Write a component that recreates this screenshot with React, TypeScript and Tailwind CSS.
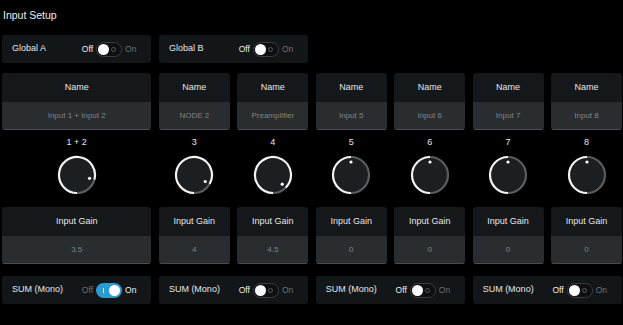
import React from 'react';

type Channel = {
  label: string;
  name: string;
  gain: number;
  wide?: boolean;
};

const channels: Channel[] = [
  { label: '1 + 2', name: 'Input 1 + Input 2', gain: 3.5, wide: true },
  { label: '3', name: 'NODE 2', gain: 4 },
  { label: '4', name: 'Preamplifier', gain: 4.5 },
  { label: '5', name: 'Input 5', gain: 0 },
  { label: '6', name: 'Input 6', gain: 0 },
  { label: '7', name: 'Input 7', gain: 0 },
  { label: '8', name: 'Input 8', gain: 0 },
];

const sums = [true, false, false, false];

function Toggle({ on }: { on: boolean }) {
  return (
    <div className="flex items-center gap-[3px] text-[8.5px]">
      <span className={on ? 'text-[#6d7073]' : 'text-[#eeeeee]'}>Off</span>
      {on ? (
        <div className="flex h-[15px] w-[26px] items-center justify-between rounded-full bg-[#2b9bd2] pl-[7px] pr-[2px]">
          <span className="h-[5px] w-px bg-[#cfe9f6]" />
          <span className="h-[11px] w-[11px] rounded-full bg-white" />
        </div>
      ) : (
        <div className="flex h-[15px] w-[26px] items-center justify-between rounded-full border border-[#3a3d41] bg-[#0d0f11] pl-[1px] pr-[5px]">
          <span className="h-[11px] w-[11px] rounded-full bg-white" />
          <span className="h-[5px] w-[5px] rounded-full border border-[#55585b]" />
        </div>
      )}
      <span className={on ? 'text-[#eeeeee]' : 'text-[#6d7073]'}>On</span>
    </div>
  );
}

function Knob({ value }: { value: number }) {
  const cx = 20;
  const cy = 20;
  const r = 18;
  const angle = (value / 6) * 180;
  const rad = (angle * Math.PI) / 180;
  const px = cx + r * Math.sin(rad);
  const py = cy - r * Math.cos(rad);
  const dx = cx + 13 * Math.sin(rad);
  const dy = cy - 13 * Math.cos(rad);
  const whiteLarge = angle + 180 > 180 ? 1 : 0;
  const grayLarge = 180 - angle > 180 ? 1 : 0;
  return (
    <svg width="40" height="40" viewBox="0 0 40 40">
      <circle cx={cx} cy={cy} r={r} fill="#1c1f22" />
      <path
        d={`M ${cx} ${cy + r} A ${r} ${r} 0 ${grayLarge} 0 ${px} ${py}`}
        fill="none"
        stroke="#5a5d60"
        strokeWidth="2.2"
      />
      <path
        d={`M ${cx} ${cy + r} A ${r} ${r} 0 ${whiteLarge} 1 ${px} ${py}`}
        fill="none"
        stroke="#f2f2f2"
        strokeWidth="2.2"
      />
      <circle cx={dx} cy={dy} r="1.6" fill="#ffffff" />
    </svg>
  );
}

function Field({ title, value }: { title: string; value: string }) {
  return (
    <div className="flex flex-col overflow-hidden rounded-[3px]">
      <div className="flex h-[29px] items-center justify-center bg-[#15181b] text-[9px] text-[#e6e6e6]">
        {title}
      </div>
      <div className="flex h-[28px] items-center justify-center border-b border-[#4a4d50] bg-[#2a2d30] text-[8px] text-[#808386]">
        {value}
      </div>
    </div>
  );
}

export default function App() {
  return (
    <div
      className="h-[325px] w-[623px] overflow-hidden bg-black pl-[2px] pr-[1px] text-[#e6e6e6]"
      style={{ fontFamily: '"Liberation Sans", Arial, sans-serif' }}
    >
      <div className="pl-px pt-[9px] text-[10.5px] leading-[12px] text-[#eeeeee]">Input Setup</div>

      <div className="mt-[14px] grid grid-cols-8 gap-x-[7.5px]">
        {['Global A', 'Global B'].map((g) => (
          <div
            key={g}
            className="col-span-2 flex h-[28px] items-center justify-between rounded-[3px] bg-[#131619] pl-[10px] pr-[15px]"
          >
            <span className="text-[9px]">{g}</span>
            <Toggle on={false} />
          </div>
        ))}
      </div>

      <div className="mt-[10px] grid grid-cols-8 gap-x-[7.5px]">
        {channels.map((ch) => (
          <div key={ch.label} className={`flex flex-col ${ch.wide ? 'col-span-2' : ''}`}>
            <Field title="Name" value={ch.name} />
            <div className="mt-[7px] text-center text-[9px] leading-[10px]">{ch.label}</div>
            <div className="mt-[8px] flex justify-center">
              <Knob value={ch.gain} />
            </div>
            <div className="mt-[12px]">
              <Field title="Input Gain" value={String(ch.gain)} />
            </div>
          </div>
        ))}
      </div>

      <div className="mt-[12px] grid grid-cols-8 gap-x-[7.5px]">
        {sums.map((on, i) => (
          <div
            key={i}
            className="col-span-2 flex h-[28px] items-center justify-between rounded-[3px] bg-[#131619] pl-[10px] pr-[15px]"
          >
            <span className="text-[9px]">SUM (Mono)</span>
            <Toggle on={on} />
          </div>
        ))}
      </div>
    </div>
  );
}
